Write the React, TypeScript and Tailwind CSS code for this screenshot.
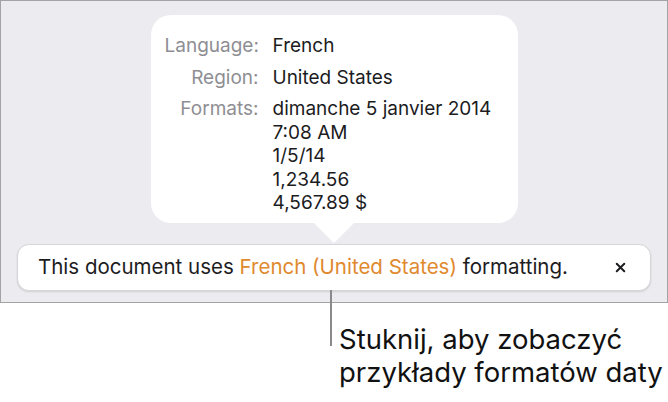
import { X } from 'lucide-react';

const rows: { label: string; values: string[] }[] = [
  { label: 'Language:', values: ['French'] },
  { label: 'Region:', values: ['United States'] },
  { label: 'Formats:', values: ['dimanche 5 janvier 2014', '7:08 AM', '1/5/14', '1,234.56', '4,567.89 $'] },
];

export default function App() {
  return (
    <div className="w-[668px] h-[402px] bg-white font-['Inter',sans-serif] overflow-hidden">
      {/* document frame */}
      <div className="h-[303px] w-[668px] border border-[#a3a3a6] bg-[#ececf0] flex flex-col items-center">
        {/* popover */}
        <div className="relative mt-[14px] w-[367px] h-[208px] bg-white rounded-[20px] pt-[19px] pl-[14px]">
          <div className="flex flex-col gap-[8px]">
            {rows.map((row) => (
              <div key={row.label} className="flex gap-[14px] text-[19px] leading-[23.5px]">
                <div className="w-[94px] text-right text-[#8e8e93] whitespace-nowrap">{row.label}</div>
                <div className="flex flex-col text-[#1c1c1e] whitespace-nowrap">
                  {row.values.map((v) => (
                    <span key={v}>{v}</span>
                  ))}
                </div>
              </div>
            ))}
          </div>
          <div className="absolute left-[162px] -bottom-[20px] w-0 h-0 border-l-[21px] border-r-[21px] border-t-[21px] border-l-transparent border-r-transparent border-t-white" />
        </div>

        {/* banner */}
        <div className="mt-[21px] w-[634px] h-[47px] bg-white rounded-[12px] border border-[#d6d6da] shadow-[0_1px_2px_rgba(0,0,0,0.12)] flex items-center justify-between pl-[20px] pr-[22px]">
          <p className="text-[20.5px] text-[#1c1c1e] whitespace-nowrap">
            This document uses <span className="text-[#e0892e]">French (United States)</span> formatting.
          </p>
          <X size={15} strokeWidth={3.2} className="text-[#1c1c1e]" />
        </div>
      </div>

      {/* callout */}
      <div className="flex pl-[330px] -mt-[13px]">
        <div className="w-[2px] h-[56px] bg-[#8a8a8a]" />
        <p className="pl-[7px] pt-[33px] text-[27.5px] leading-[33px] text-[#111] whitespace-nowrap">
          Stuknij, aby zobaczyć
          <br />
          przykłady formatów daty
        </p>
      </div>
    </div>
  );
}
